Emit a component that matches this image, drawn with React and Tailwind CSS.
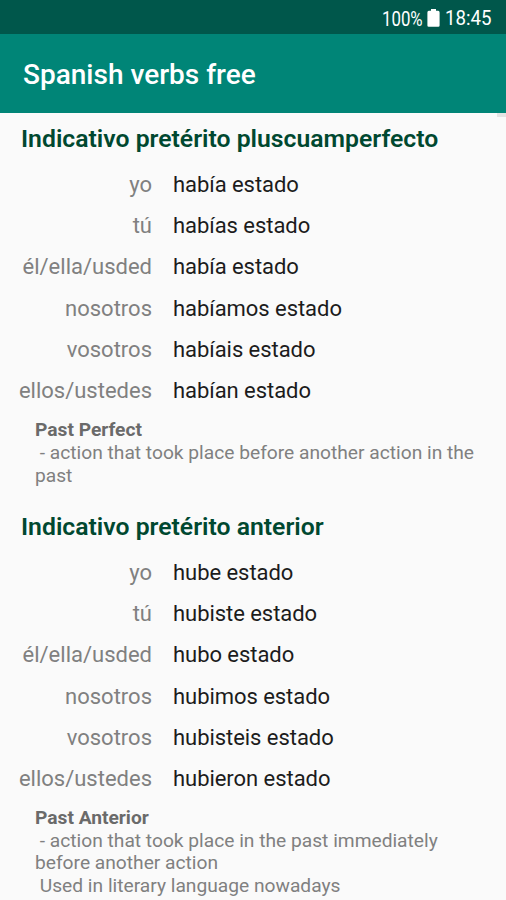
import React from 'react';

const PRONOUNS = ['yo', 'tú', 'él/ella/usded', 'nosotros', 'vosotros', 'ellos/ustedes'];

const TENSES = [
  {
    title: 'Indicativo pretérito pluscuamperfecto',
    forms: ['había estado', 'habías estado', 'había estado', 'habíamos estado', 'habíais estado', 'habían estado'],
    noteTitle: 'Past Perfect',
    notes: [' - action that took place before another action in the past'],
  },
  {
    title: 'Indicativo pretérito anterior',
    forms: ['hube estado', 'hubiste estado', 'hubo estado', 'hubimos estado', 'hubisteis estado', 'hubieron estado'],
    noteTitle: 'Past Anterior',
    notes: [' - action that took place in the past immediately before another action', ' Used in literary language nowadays'],
  },
];

const BatteryIcon = () => (
  <svg width="13" height="18" viewBox="0 0 13 18" fill="currentColor">
    <path d="M4 0h5v1.8h2.2Q12.6 2 12.6 3.5v13q0 1.3-1.3 1.3H1.7q-1.3 0-1.3-1.3v-13Q.4 2 1.8 1.8H4z" />
  </svg>
);

const StatusBar = () => (
  <div className="flex h-[34px] items-center justify-end bg-[#00574b] pt-[2px] pr-[14px] text-white">
    <span className="w-[41px] pt-px text-[20px]">
      <span className="inline-block origin-left scale-x-[0.84]">100%</span>
    </span>
    <span className="ml-[4px] mr-[5px]"><BatteryIcon /></span>
    <span className="w-[47px] pt-[2px] text-[21px]">
      <span className="inline-block origin-left scale-x-[0.89]">18:45</span>
    </span>
  </div>
);

const TenseSection = ({ tense }) => (
  <section className="h-[387.8px] shrink-0">
    <h2 className="h-[50.7px] pt-[11px] pl-[21px] text-[24.75px] leading-[30px] font-semibold text-[#004830]">{tense.title}</h2>

    {/* Conjugation rows */}
    {tense.forms.map((form, i) => (
      <div key={PRONOUNS[i]} className="flex h-[41.3px] items-center text-[22px]">
        <span className="w-[152px] text-right text-[#808080]">{PRONOUNS[i]}</span>
        <span className="ml-[21px] tracking-[-0.05px] text-[#1c1c1c]">{form}</span>
      </div>
    ))}

    {/* Usage note */}
    <div className="mt-[8px] pr-[20px] pl-[35px] text-[19.2px] leading-[22.6px] whitespace-pre-wrap text-[#808080]">
      <p className="font-bold text-[#6a6a6a]">{tense.noteTitle}</p>
      {tense.notes.map(note => <p key={note}>{note}</p>)}
    </div>
  </section>
);

const App = () => (
  <div className="flex h-[900px] w-[506px] flex-col overflow-hidden bg-[#fafafa] font-['Roboto',sans-serif]">
    <StatusBar />
    <header className="flex h-[79px] shrink-0 items-center bg-[#008577] pt-[3px] pl-[23px]">
      <h1 className="text-[28px] font-medium text-white">Spanish verbs free</h1>
    </header>
    <main className="relative flex-1 overflow-hidden">
      {/* Scrollbar tip */}
      <div className="absolute top-0 right-0 h-[4px] w-[9px] bg-[#e4e4e4]" />
      {TENSES.map(tense => <TenseSection key={tense.title} tense={tense} />)}
    </main>
  </div>
);

export default App;
